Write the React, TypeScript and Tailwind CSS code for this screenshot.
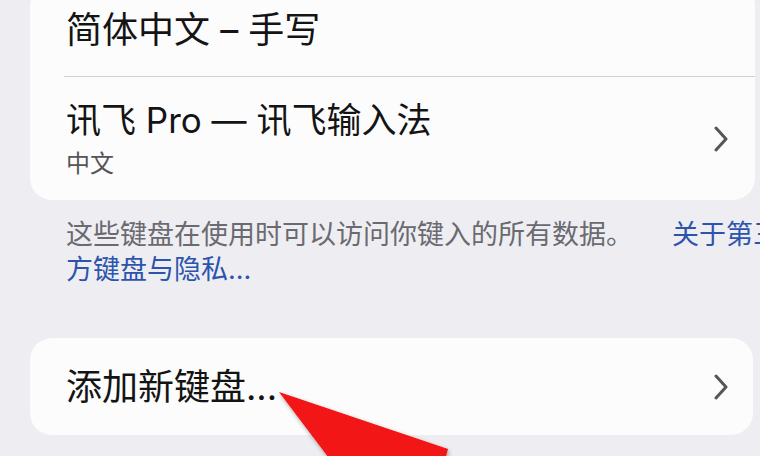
import React from "react";

const font = { fontFamily: '"Inter", "Noto Sans CJK SC", sans-serif' };

function Chevron() {
  return (
    <svg width="16" height="26" viewBox="0 0 16 26" className="shrink-0">
      <polyline points="3,2 13,13 3,24" fill="none" stroke="#55555a" strokeWidth="3" strokeLinecap="round" strokeLinejoin="round" />
    </svg>
  );
}

export default function App() {
  return (
    <div className="relative w-[760px] h-[456px] overflow-hidden bg-[#eeeef2]" style={font}>
      <div className="ml-[30px] mr-[5px] mt-[-16px] rounded-[22px] bg-[#fcfcfd]">
        <div className="h-[92px] flex items-center pl-[36px] text-[36px] leading-none text-[#141414]">
          简体中文 – 手写
        </div>
        <div className="ml-[34px] h-px bg-[#cfcfd3]" />
        <div className="h-[123px] flex items-center pl-[36px] pr-[26px]">
          <div className="flex-1 flex flex-col">
            <div className="text-[35px] leading-[40px] text-[#141414]">讯飞 Pro — 讯飞输入法</div>
            <div className="mt-[10px] text-[24px] leading-[28px] text-[#555558]">中文</div>
          </div>
          <Chevron />
        </div>
      </div>

      <div className="pl-[66px] pt-[17px] text-[27px] leading-[35px] text-[#6a6a70] whitespace-nowrap">
        <div className="flex">
          <span>这些键盘在使用时可以访问你键入的所有数据。</span>
          <span className="ml-[39px] text-[#2c54ad]">关于第三</span>
        </div>
        <div className="text-[#2c54ad]">方键盘与隐私...</div>
      </div>

      <div className="ml-[30px] mr-[7px] mt-[51px] h-[97px] rounded-[22px] bg-[#fcfcfd] flex items-center pl-[36px] pr-[24px]">
        <div className="flex-1 text-[36px] leading-none text-[#141414]">添加新键盘...</div>
        <Chevron />
      </div>

      <svg className="absolute left-0 top-0 pointer-events-none" width="760" height="456" viewBox="0 0 760 456">
        <defs>
          <filter id="sh" x="-20%" y="-20%" width="140%" height="140%">
            <feDropShadow dx="1" dy="2" stdDeviation="2" floodColor="#000" floodOpacity="0.35" />
          </filter>
        </defs>
        <polygon points="279,392 448,449 442,470 338,470" fill="#f21212" filter="url(#sh)" />
      </svg>
    </div>
  );
}
